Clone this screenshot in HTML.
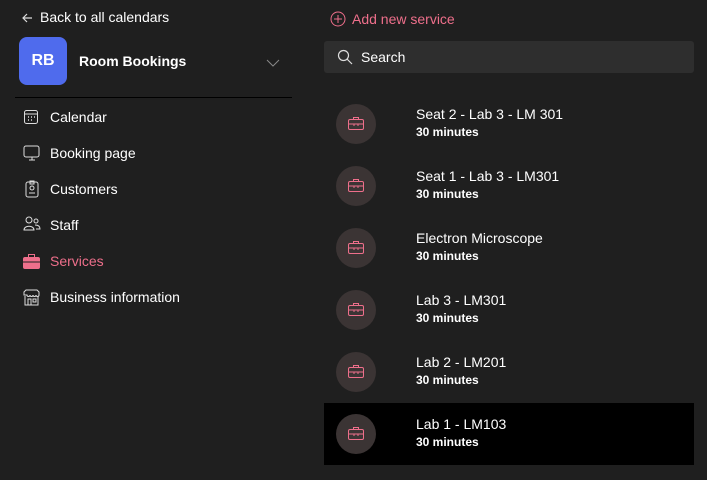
<!DOCTYPE html><html><head><style>
body{margin:0;width:707px;height:480px;background:#1f1f1f;font-family:"Liberation Sans",sans-serif;color:#fff;position:relative;overflow:hidden}
.a{position:absolute}
.nav{left:50px;font-size:14px}
.ic{left:23px}
.t1{left:416px;font-size:14px}
.t2{left:416px;font-size:12px;font-weight:bold}
.c{left:336px;width:40px;height:40px;border-radius:50%;background:#3b3434}
</style></head><body>
<svg class="a" style="left:21px;top:12px" width="12" height="12" viewBox="0 0 12 12"><path d="M11 6H2M6 2L2 6l4 4" stroke="#ddd" fill="none" stroke-width="1.2"/></svg>
<div class="a" style="left:40px;top:9px;font-size:14px">Back to all calendars</div>
<div class="a" style="left:19px;top:37px;width:48px;height:48px;border-radius:8px;background:#4f6bed;font-weight:bold;font-size:16px;line-height:48px;text-align:center">RB</div>
<div class="a" style="left:79px;top:53px;font-size:14px;font-weight:bold">Room Bookings</div>
<svg class="a" style="left:266px;top:59px" width="14" height="8"><path d="M1 1l6 6 6-6" stroke="#888" fill="none"/></svg>
<div class="a" style="left:15px;top:97px;width:277px;height:1px;background:#000"></div>
<svg class="a ic" style="top:109px" width="16" height="16" viewBox="0 0 16 16" fill="none" stroke="#ddd"><rect x="1.5" y="1.5" width="13" height="13" rx="2"/><path d="M1.5 5h13"/><path d="M5 8h1M8 8h1M11 8h1M5 11h1M8 11h1" stroke-width="1.5"/></svg>
<div class="a nav" style="top:109px">Calendar</div>
<svg class="a ic" style="top:145px" width="18" height="17" viewBox="0 0 18 17" fill="none" stroke="#ddd"><rect x="1" y="1" width="15" height="11" rx="2"/><path d="M6 15h6M9 12v3"/></svg>
<div class="a nav" style="top:145px">Booking page</div>
<svg class="a ic" style="top:180px;left:25px" width="14" height="18" viewBox="0 0 14 18" fill="none" stroke="#ddd"><rect x="1" y="2" width="12" height="15" rx="2"/><rect x="5" y="1" width="4" height="3"/><circle cx="7" cy="8" r="2"/><path d="M4 13h6"/></svg>
<div class="a nav" style="top:181px">Customers</div>
<svg class="a ic" style="top:216px" width="18" height="16" viewBox="0 0 18 16" fill="none" stroke="#ddd"><circle cx="6" cy="4" r="3"/><circle cx="13" cy="5" r="2"/><path d="M1 14c0-5 10-5 10 0zM12 9c3 0 5 1 5 4h-4"/></svg>
<div class="a nav" style="top:217px">Staff</div>
<svg class="a ic" style="top:254px" width="17" height="15" viewBox="0 0 17 15"><rect x="0" y="3" width="17" height="12" rx="2" fill="#ee6f8b"/><rect x="5.5" y="0.5" width="6" height="4" fill="none" stroke="#ee6f8b"/><path d="M0 8h17" stroke="#1f1f1f"/></svg>
<div class="a nav" style="top:253px;color:#ee6f8b">Services</div>
<svg class="a ic" style="top:289px" width="17" height="17" viewBox="0 0 17 17" fill="none" stroke="#ddd"><path d="M1 6V3l2-2h11l2 2v3c0 2-3 2-3 0 0 2-3 2-3 0 0 2-3 2-3 0 0 2-3 2-3 0zM2 7v9h13V7M5 16v-6h3v6M10 10h3v3h-3z"/></svg>
<div class="a nav" style="top:289px">Business information</div>

<svg class="a" style="left:330px;top:11px" width="16" height="16" viewBox="0 0 16 16" fill="none" stroke="#ee6f8b"><circle cx="8" cy="8" r="7"/><path d="M8 4v8M4 8h8"/></svg>
<div class="a" style="left:352px;top:11px;font-size:14px;color:#ee6f8b">Add new service</div>
<div class="a" style="left:324px;top:41px;width:370px;height:32px;border-radius:3px;background:#2e2e2e"></div>
<svg class="a" style="left:337px;top:49px" width="16" height="16" viewBox="0 0 16 16" fill="none" stroke="#ddd" stroke-width="1.2"><circle cx="6.5" cy="6.5" r="5"/><path d="M10 10l5 5"/></svg>
<div class="a" style="left:361px;top:49px;font-size:14px">Search</div>
<div class="a" style="left:324px;top:403px;width:370px;height:62px;background:#000"></div>

<div class="a c" style="top:104px"></div><div class="a t1" style="top:106px">Seat 2 - Lab 3 - LM 301</div><div class="a t2" style="top:125px">30 minutes</div>
<div class="a c" style="top:166px"></div><div class="a t1" style="top:168px">Seat 1 - Lab 3 - LM301</div><div class="a t2" style="top:187px">30 minutes</div>
<div class="a c" style="top:228px"></div><div class="a t1" style="top:230px">Electron Microscope</div><div class="a t2" style="top:249px">30 minutes</div>
<div class="a c" style="top:290px"></div><div class="a t1" style="top:292px">Lab 3 - LM301</div><div class="a t2" style="top:311px">30 minutes</div>
<div class="a c" style="top:352px"></div><div class="a t1" style="top:354px">Lab 2 - LM201</div><div class="a t2" style="top:373px">30 minutes</div>
<div class="a c" style="top:414px"></div><div class="a t1" style="top:416px">Lab 1 - LM103</div><div class="a t2" style="top:435px">30 minutes</div>

<svg width="0" height="0" style="position:absolute"><defs><g id="b" fill="none" stroke="#ee6f8b"><rect x="0.5" y="3.5" width="15" height="10" rx="1.5"/><path d="M5.5 3.5v-2h5v2M0.5 8h15M6 8v2M10 8v2"/></g></defs></svg>
<svg class="a" style="left:348px;top:116px" width="16" height="15"><use href="#b"/></svg>
<svg class="a" style="left:348px;top:178px" width="16" height="15"><use href="#b"/></svg>
<svg class="a" style="left:348px;top:240px" width="16" height="15"><use href="#b"/></svg>
<svg class="a" style="left:348px;top:302px" width="16" height="15"><use href="#b"/></svg>
<svg class="a" style="left:348px;top:364px" width="16" height="15"><use href="#b"/></svg>
<svg class="a" style="left:348px;top:426px" width="16" height="15"><use href="#b"/></svg>
</body></html>
